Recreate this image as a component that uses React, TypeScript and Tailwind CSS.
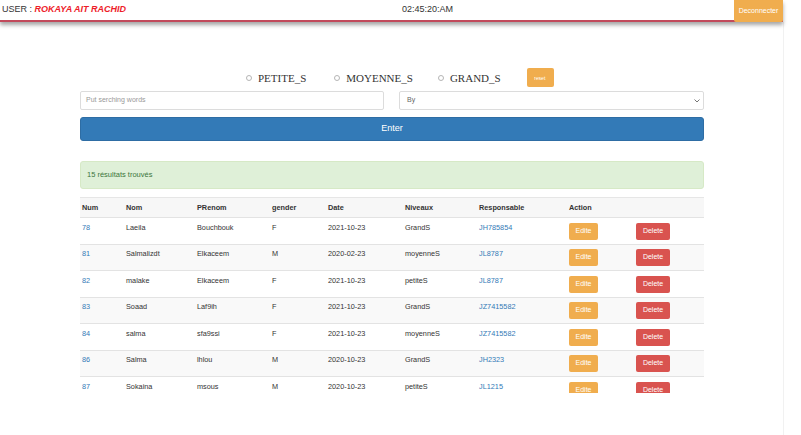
import React from "react";

const rows = [
  ["78", "Laeila", "Bouchbouk", "F", "2021-10-23", "GrandS", "JH785854"],
  ["81", "Salmalizdt", "Elkaceem", "M", "2020-02-23", "moyenneS", "JL8787"],
  ["82", "malake", "Elkaceem", "F", "2021-10-23", "petiteS", "JL8787"],
  ["83", "Soaad", "Laf9ih", "F", "2021-10-23", "GrandS", "JZ7415582"],
  ["84", "salma", "sfa9ssi", "F", "2021-10-23", "moyenneS", "JZ7415582"],
  ["86", "Salma", "lhlou", "M", "2020-10-23", "GrandS", "JH2323"],
  ["87", "Sokaina", "msous", "M", "2020-10-23", "petiteS", "JL1215"],
];

function Radio({ label }: { label: string }) {
  return (
    <div className="flex items-center">
      <span className="w-[6px] h-[6px] rounded-full border border-[#b5b5b5] bg-white" />
      <span className="ml-[6px] text-[11px] leading-[14px] text-[#333]" style={{ fontFamily: '"Liberation Serif", serif' }}>
        {label}
      </span>
    </div>
  );
}

export default function App() {
  return (
    <div className="relative w-[801px] h-[435px] bg-white overflow-hidden" style={{ fontFamily: '"Liberation Sans", Arial, sans-serif' }}>
      <div className="absolute left-[783px] top-[22px] w-px h-[413px] bg-[#f1f1f1]" />
      {/* header */}
      <div className="relative z-10 w-[783px] h-[22px] flex items-center bg-white border-b-2 border-[#c24a5c] shadow-[0_3px_4px_rgba(0,0,0,0.35)]">
        <div className="pl-[2px] w-[402px] text-[9px] text-[#333] whitespace-nowrap">
          USER : <span className="font-bold italic text-[#ee1d2a]">ROKAYA AIT RACHID</span>
        </div>
        <div className="text-[9px] text-[#333]">02:45:20:AM</div>
        <div className="ml-auto h-[22px] w-[49px] flex items-center justify-center bg-[#f0ad4e] rounded-b-[2px] text-[7px] text-white self-start">
          Deconnecter
        </div>
      </div>

      {/* radios */}
      <div className="mt-[46px] flex items-center pl-[246px] h-[19px]">
        <Radio label="PETITE_S" />
        <div className="w-[28px]" />
        <Radio label="MOYENNE_S" />
        <div className="w-[25px]" />
        <Radio label="GRAND_S" />
        <div className="w-[26px]" />
        <div className="w-[27px] h-[19px] rounded-[2px] bg-[#f0ad4e] flex items-center justify-center text-white">
          <span className="text-[6px] leading-none scale-[0.85] inline-block">reset</span>
        </div>
      </div>

      {/* search */}
      <div className="mt-[4px] ml-[80px] w-[624px] flex gap-[15px]">
        <div className="w-[304px] h-[19px] border border-[#dcdcdc] rounded-[2px] flex items-center pl-[5px] text-[7px] text-[#999]">
          Put serching words
        </div>
        <div className="w-[305px] h-[19px] border border-[#dcdcdc] rounded-[2px] flex items-center pl-[7px] pr-[3px] text-[7px] text-[#666]">
          <span>By</span>
          <svg className="ml-auto" width="6" height="4" viewBox="0 0 6 4">
            <path d="M0.5 0.5 L3 3 L5.5 0.5" fill="none" stroke="#666" strokeWidth="0.9" />
          </svg>
        </div>
      </div>

      <div className="mt-[7px] ml-[80px] w-[624px] h-[24px] rounded-[3px] bg-[#337ab7] border border-[#2e6da4] flex items-center justify-center text-[9px] text-white">
        Enter
      </div>

      <div className="mt-[20px] ml-[80px] w-[624px] h-[28px] rounded-[3px] bg-[#dff0d8] border border-[#d6e9c6] flex items-center pl-[6px] text-[7.5px] text-[#3c763d]">
        15 résultats trouvés
      </div>

      <div className="mt-[8px] ml-[80px] w-[624px] h-[196px] overflow-hidden">
        <table className="w-[624px] table-fixed border-collapse text-[7.3px] text-[#333]">
          <colgroup>
            <col className="w-[44px]" />
            <col className="w-[71px]" />
            <col className="w-[75px]" />
            <col className="w-[56px]" />
            <col className="w-[77px]" />
            <col className="w-[74px]" />
            <col className="w-[90px]" />
            <col className="w-[67px]" />
            <col className="w-[70px]" />
          </colgroup>
          <thead>
            <tr className="bg-[#f7f7f7] border-t border-[#e6e6e6] h-[20px]">
              {["Num", "Nom", "PRenom", "gender", "Date", "Niveaux", "Responsable", "Action", ""].map((h, i) => (
                <th key={i} className="text-left font-bold pl-[2px] align-middle leading-[10px]">{h}</th>
              ))}
            </tr>
          </thead>
          <tbody>
            {rows.map((r, i) => (
              <tr key={i} className={`h-[26.5px] border-t border-[#e3e3e3] ${i % 2 === 1 ? "bg-[#f9f9f9]" : "bg-white"}`}>
                {r.map((c, j) => (
                  <td key={j} className={`align-top pl-[2px] pt-[4.5px] leading-[10px] ${j === 0 || j === 6 ? "text-[#337ab7]" : ""}`}>
                    {c}
                  </td>
                ))}
                <td className="align-top pl-[2px] pt-[4.5px]">
                  <div className="w-[29px] h-[17px] rounded-[2px] bg-[#f0ad4e] flex items-center justify-center text-white text-[7px]">Edite</div>
                </td>
                <td className="align-top pl-[2px] pt-[4.5px]">
                  <div className="w-[34px] h-[17px] rounded-[2px] bg-[#d9534f] flex items-center justify-center text-white text-[7px]">Delete</div>
                </td>
              </tr>
            ))}
          </tbody>
        </table>
      </div>
    </div>
  );
}
